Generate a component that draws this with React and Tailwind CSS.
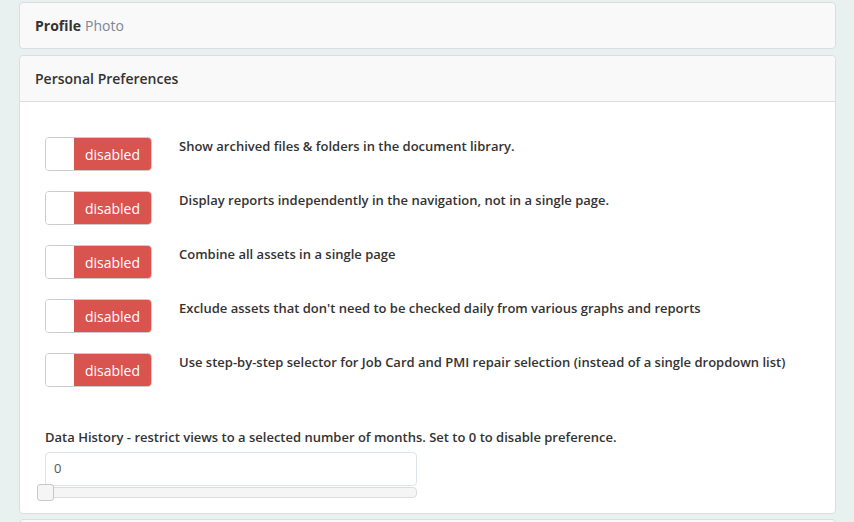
import React from "react";

const items = [
  "Show archived files & folders in the document library.",
  "Display reports independently in the navigation, not in a single page.",
  "Combine all assets in a single page",
  "Exclude assets that don't need to be checked daily from various graphs and reports",
  "Use step-by-step selector for Job Card and PMI repair selection (instead of a single dropdown list)",
];

function Toggle() {
  return (
    <div className="flex h-[34px] w-[107px] shrink-0 overflow-hidden rounded-[4px] border border-[#cccccc] bg-white">
      <div className="w-[28px] bg-white" />
      <div className="flex flex-1 items-center justify-center bg-[#d9534f] text-[14px] text-white">
        disabled
      </div>
    </div>
  );
}

export default function App() {
  return (
    <div
      className="min-h-[522px] w-[854px] overflow-hidden bg-[#e9f0f0] pt-[2px] text-[#333333]"
      style={{ fontFamily: '"Open Sans", "Noto Sans", sans-serif' }}
    >
      <div className="ml-[19px] w-[817px]">
        <div className="flex h-[47px] items-center rounded-[4px] border border-[#dddddd] bg-[#f9f9f9] px-[15px] text-[14px]">
          <span className="font-bold">Profile</span>
          <span className="ml-[4px] text-[#7a8797]">Photo</span>
        </div>

        <div className="mt-[6px] rounded-[4px] border border-[#dddddd] bg-white">
          <div className="flex h-[46px] items-center rounded-t-[4px] border-b border-[#dddddd] bg-[#f9f9f9] px-[15px] text-[14px] font-semibold">
            Personal Preferences
          </div>
          <div className="px-[25px] pb-[15px] pt-[35px]">
            <div className="flex flex-col gap-[20px]">
              {items.map((t) => (
                <div key={t} className="flex items-start gap-[27px]">
                  <Toggle />
                  <div className="text-[13px] font-semibold leading-[18px]">{t}</div>
                </div>
              ))}
            </div>
            <div className="mt-[40px] text-[13px] font-semibold leading-[20px]">
              Data History - restrict views to a selected number of months. Set to 0 to disable preference.
            </div>
            <div className="mt-[5px] flex h-[34px] w-[372px] items-center rounded-[4px] border border-[#dde3e6] px-[8px] text-[13px] text-[#555555]">
              0
            </div>
            <div className="relative mt-[1px] h-[11px] w-[372px]">
              <div className="absolute left-0 right-0 top-0 h-[11px] rounded-[4px] border border-[#dddddd] bg-[#f5f5f5]" />
              <div className="absolute left-[-8px] top-[-3px] h-[17px] w-[17px] rounded-[3px] border border-[#c8c8c8] bg-[#f5f5f5]" />
            </div>
          </div>
        </div>

        <div className="mt-[5px] h-[20px] rounded-t-[4px] border border-[#dddddd] bg-[#f9f9f9]" />
      </div>
    </div>
  );
}
